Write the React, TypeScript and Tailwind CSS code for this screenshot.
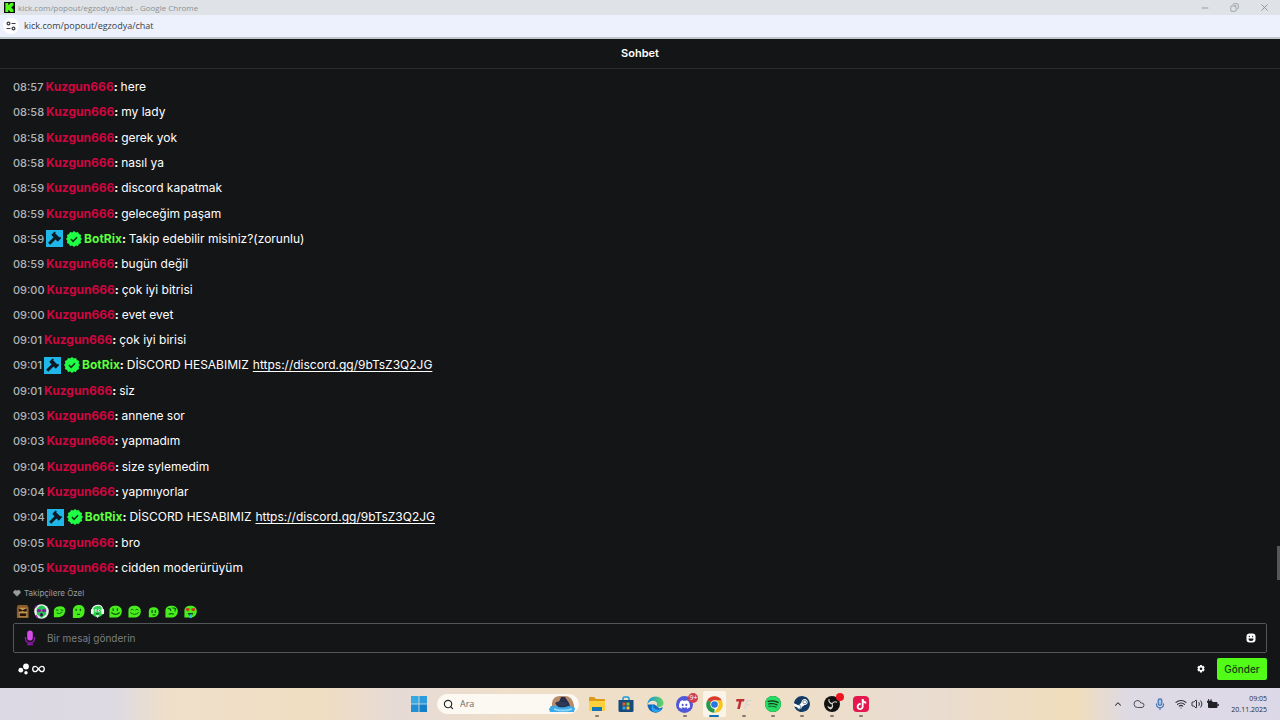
import type { ReactNode } from 'react';
import { SiDiscord, SiSpotify, SiTiktok, SiSteam } from 'react-icons/si';
import { ChevronUp, Cloud, Copy, Heart, Minus, Search, Volume2, Wifi, X } from 'lucide-react';

type Message = { time: string; user: string; text: string; link?: string };

const messages: Message[] = [
    { time: '08:57', user: 'Kuzgun666', text: 'here' },
    { time: '08:58', user: 'Kuzgun666', text: 'my lady' },
    { time: '08:58', user: 'Kuzgun666', text: 'gerek yok' },
    { time: '08:58', user: 'Kuzgun666', text: 'nasıl ya' },
    { time: '08:59', user: 'Kuzgun666', text: 'discord kapatmak' },
    { time: '08:59', user: 'Kuzgun666', text: 'geleceğim paşam' },
    { time: '08:59', user: 'BotRix', text: 'Takip edebilir misiniz?(zorunlu)' },
    { time: '08:59', user: 'Kuzgun666', text: 'bugün değil' },
    { time: '09:00', user: 'Kuzgun666', text: 'çok iyi bitrisi' },
    { time: '09:00', user: 'Kuzgun666', text: 'evet evet' },
    { time: '09:01', user: 'Kuzgun666', text: 'çok iyi birisi' },
    { time: '09:01', user: 'BotRix', text: 'DİSCORD HESABIMIZ', link: 'https://discord.gg/9bTsZ3Q2JG' },
    { time: '09:01', user: 'Kuzgun666', text: 'siz' },
    { time: '09:03', user: 'Kuzgun666', text: 'annene sor' },
    { time: '09:03', user: 'Kuzgun666', text: 'yapmadım' },
    { time: '09:04', user: 'Kuzgun666', text: 'size sylemedim' },
    { time: '09:04', user: 'Kuzgun666', text: 'yapmıyorlar' },
    { time: '09:04', user: 'BotRix', text: 'DİSCORD HESABIMIZ', link: 'https://discord.gg/9bTsZ3Q2JG' },
    { time: '09:05', user: 'Kuzgun666', text: 'bro' },
    { time: '09:05', user: 'Kuzgun666', text: 'cidden moderürüyüm' },
];

const KickLogo = () => (
    <svg viewBox="0 0 12 12" className="h-[11px] w-[11px] shrink-0">
        <rect width="12" height="12" fill="#0b0e0f" />
        <path d="M1.5 1h3.2v2.4h1V2.2h1V1h3.6v3.2H9.2v1h-1v1.6h1v1h1.1V11H6.7V9.8h-1V8.6h-1V11H1.5z" fill="#53fc18" />
    </svg>
);

const ModBadge = () => (
    <svg viewBox="0 0 17 17" className="h-[17px] w-[17px]">
        <rect width="17" height="17" fill="#1fb6ea" />
        <path d="M3.2 13.8l6-6" stroke="#0d1b24" strokeWidth="3" />
        <path d="M7.2 4.2L13 10" stroke="#0d1b24" strokeWidth="4" />
        <path d="M6 5.4L9.2 2M11.2 10.8l3.4-3.4" stroke="#0d1b24" strokeWidth="1.8" />
    </svg>
);

const VerifiedBadge = () => (
    <svg viewBox="0 0 16 16" className="h-4 w-4">
        <path
            d="M8 0l1.8 1.5L12 1l.9 2.1 2.2.9-.5 2.2L16 8l-1.4 1.8.5 2.2-2.2.9L12 15l-2.2-.5L8 16l-1.8-1.5L4 15l-.9-2.1-2.2-.9.5-2.2L0 8l1.4-1.8L.9 4l2.2-.9L4 1l2.2.5z"
            fill="#1fff45"
        />
        <path d="M4.9 8.2l2.2 2.1 4-4" stroke="#0c3512" strokeWidth="1.6" fill="none" />
    </svg>
);

const ChatRow = ({ message }: { message: Message }) => {
    const isBot = message.user === 'BotRix';
    return (
        <li className="flex h-5 items-center whitespace-pre text-xs leading-5 text-white">
            <time className="mr-[2px] text-[11px] leading-5 font-medium text-[#b0b5b9]">{message.time}</time>
            {isBot && (
                <span className="mr-[2px] flex items-center gap-[3px]">
                    <ModBadge />
                    <VerifiedBadge />
                </span>
            )}
            <button type="button" className={isBot ? 'font-bold text-[#5cff3c]' : 'font-bold text-[#cf0640]'}>
                {message.user}
            </button>
            <span className="font-bold">: </span>
            <span>{message.text}</span>
            {message.link && (
                <a href={message.link} className="ml-1 underline underline-offset-2">
                    {message.link}
                </a>
            )}
        </li>
    );
};

const GREEN = '#48ee1c';
const DARK = '#0d5a12';

const blob = 'M1.5 14.5V7.2C1.5 3.6 4 1.8 8 1.8s6.7 2 6.7 5.8c0 4.2-3 6.9-7.2 6.9z';

const emotes: { name: string; art: ReactNode }[] = [
    {
        name: 'öfkeli',
        art: (
            <>
                <path d="M3 1h10l1.500 3v11H2V4z" fill="#8a5c28" />
                <path d="M4 4h9v10H4z" fill="#c29555" />
                <path d="M4 4.500l3.500 2h1l4-2V8H9L8 7 7 8H4z" fill="#21140a" />
                <path d="M5 10h7v3H5z" fill="#21140a" />
            </>
        ),
    },
    {
        name: 'kulaklık mor',
        art: (
            <>
                <circle cx="8" cy="8" r="7.8" fill="#e6f1e8" />
                <path d="M3 5Q8-2 13 5v6l-5 4-5-4z" fill="#22c750" />
                <ellipse cx="5.2" cy="7" rx="2.4" ry="1.8" fill="#8a1ba0" />
                <ellipse cx="10.8" cy="7" rx="2.4" ry="1.8" fill="#8a1ba0" />
                <ellipse cx="8" cy="11.4" rx="1.6" ry="1.8" fill="#3c1048" />
                <path d="M2 12l2 3M1 4l2-2" stroke="#b01fd0" strokeWidth="1.5" />
            </>
        ),
    },
    {
        name: 'göz kırpma',
        art: (
            <>
                <path d="M2 14V6.5C3 3.5 6 2.5 9 2.5c3 0 5 1.5 5 4.5 0 4-3 7-7 7z" fill={GREEN} />
                <path d="M4 6.5h3M9 6l3 1M5 9.5q3 2 6-1" stroke={DARK} fill="none" />
            </>
        ),
    },
    {
        name: 'düşünceli',
        art: (
            <>
                <path d="M2 15V7c0-4 3-6 6.500-6s6 2 6 6-1.500 8-6.500 8z" fill={GREEN} />
                <path d="M5.500 5v2.500M10 5v2.500M6.500 11h3" stroke={DARK} strokeWidth="1.300" fill="none" />
            </>
        ),
    },
    {
        name: 'kulaklık',
        art: (
            <>
                <circle cx="8" cy="8" r="6.2" fill="#28d448" />
                <path d="M2.500 6Q3 2 8 1.500T13.500 6" stroke="#e8f6eb" strokeWidth="1.200" fill="none" />
                <rect x="1" y="5" width="3" height="6" rx="1.5" fill="#e8f6eb" />
                <rect x="12" y="5" width="3" height="6" rx="1.5" fill="#e8f6eb" />
                <path d="M6 12h4l-2 3z" fill="#e8f6eb" />
                <circle cx="6.2" cy="7" r="1.3" fill="#fff" />
                <circle cx="9.8" cy="7" r="1.3" fill="#fff" />
                <path d="M6 7h.8M9.500 7h.8M6.500 10.500h3" stroke="#102b15" />
            </>
        ),
    },
    {
        name: 'gülümseme',
        art: (
            <>
                <path d={blob} fill={GREEN} />
                <path d="M5.5 4.5v3M10 4.5v3M3.500 9q4.500 4 9 0" stroke={DARK} strokeWidth="1.3" fill="none" />
            </>
        ),
    },
    {
        name: 'mutlu',
        art: (
            <>
                <path d={blob} fill={GREEN} />
                <path d="M4 6.500q1.500-2 3 0M9 6.500q1.500-2 3 0M3.500 9q4.500 4 9 0" stroke={DARK} fill="none" />
            </>
        ),
    },
    {
        name: 'küçük',
        art: (
            <>
                <path d="M3 14V8c0-3 2-4.500 5-4.500s5.500 1.500 5.500 5S11 14 8 14z" fill={GREEN} />
                <path d="M6.500 6.500v3M10 6.500v3M7 11.500h3" stroke={DARK} strokeWidth="1.400" />
            </>
        ),
    },
    {
        name: 'şaşkın',
        art: (
            <>
                <path d={blob} fill={GREEN} />
                <path d="M4 4.500l3 1v2M9 4l3.500 1-1 3M5 11q3-1.500 5.500 0" stroke={DARK} strokeWidth="1.200" fill="none" />
            </>
        ),
    },
    {
        name: 'aşık',
        art: (
            <>
                <path d={blob} fill={GREEN} />
                <path d="M3 4.500h4v2L5 8 3 6.500zM9 4.500h4v2L11 8 9 6.500z" fill="#d0301c" />
                <path d="M5 9.500h6l-1.500 3h-3z" fill="#11491a" />
                <path d="M7 11h2.500v4H7z" fill="#38b8e8" />
            </>
        ),
    },
];

const MicIcon = () => (
    <svg viewBox="0 0 12 16" className="h-4 w-3">
        <rect x="3.2" y=".5" width="5.6" height="10" rx="2.8" fill="#d44be8" />
        <path d="M1.5 7v1.500a4.500 4.500 0 009 0V7M6 13v2M3 14.500h6" stroke="#8b17a8" strokeWidth="1.500" fill="none" />
    </svg>
);

const EdgeIcon = () => (
    <svg viewBox="0 0 18 18" className="h-[17px] w-[17px]">
        <defs>
            <linearGradient id="edge-top" x1="0" x2="1" y1="0" y2="0">
                <stop stopColor="#1694df" />
                <stop offset="1" stopColor="#64d65a" />
            </linearGradient>
        </defs>
        <path d="M.5 9A8.500 8.500 0 0017 12l-4 1-5-4z" fill="#1266bd" />
        <path d="M.5 9C.5 4 4.500.5 9 .5c5 0 8.500 3.500 8.500 7 0 3-2.500 4.200-4.700 4.200-1.600 0-2.800-.6-2.800-1.300 0-.5.8-.8.8-2C10.800 6.500 9 5 6.500 5 3.500 5 1.200 6.500.5 9z" fill="url(#edge-top)" />
        <path d="M6.300 8.500C6 12 8.500 14.500 12 14.500c1.800 0 3.300-.6 4.300-1.200-1.600 2.700-4 4.200-7 4.200C5.500 17 3 13 6.300 8.500z" fill="#2b9fe8" />
    </svg>
);

const ChromeIcon = () => (
    <svg viewBox="0 0 18 18" className="h-[17px] w-[17px]">
        <path d="M9 9L1.400 4.600a8.800 8.800 0 0115.200 0z" fill="#dc3a2c" />
        <path d="M9 9L1.400 4.600A8.800 8.800 0 009 17.800z" fill="#23994a" />
        <path d="M9 17.800a8.800 8.800 0 007.600-13.200H9V9l3.800 2.200z" fill="#f6c61c" />
        <circle cx="9" cy="9" r="4.400" fill="#fff" />
        <circle cx="9" cy="9" r="3.500" fill="#2d74e0" />
    </svg>
);

const ObsIcon = () => (
    <svg viewBox="0 0 16 16" className="h-4 w-4">
        <circle cx="8" cy="8" r="8" fill="#111" />
        <g fill="none" stroke="#d8d4cf" strokeWidth="1.100">
            <path d="M5 3c-.5 2.500.8 4.300 3 4.600" />
            <path d="M13.200 6.200c-2.400-.9-4.400-.2-5.200 1.800" />
            <path d="M6.200 13.200C8.300 12 9 9.800 8 8" />
        </g>
        <path d="M3.500 9.500c0 2 1 3.500 2.700 3.700 1.200-.6 1.900-1.600 2-2.700-1.900.9-3.700.5-4.700-1z" fill="#cfcbc6" />
    </svg>
);

const taskApps: { name: string; icon: ReactNode; running?: boolean; active?: boolean }[] = [
    {
        name: 'Dosya Gezgini',
        running: true,
        icon: (
            <svg viewBox="0 0 18 16" className="h-4 w-[18px]">
                <path d="M1 2q0-1 1-1h4l2 2h8q1 0 1 1v10H1z" fill="#dc9a15" />
                <path d="M1 5h16v8.500q0 1.500-1.500 1.500h-13Q1 15 1 13.500z" fill="#fdd03c" />
                <path d="M4 11h10v4H4z" fill="#1677b8" />
            </svg>
        ),
    },
    {
        name: 'Microsoft Store',
        icon: (
            <svg viewBox="0 0 16 17" className="h-[17px] w-4">
                <path d="M5 5V2.500Q5 1 6.500 1h3Q11 1 11 2.500V5" stroke="#1c9ad6" strokeWidth="1.500" fill="none" />
                <path d="M.5 4h15v10.500q0 1.500-1.500 1.500H2Q.5 16 .5 14.500z" fill="#17497c" />
                <path d="M4.500 6.500h3v3h-3z" fill="#e85a2a" />
                <path d="M8.500 6.500h3v3h-3z" fill="#86c332" />
                <path d="M4.500 10.500h3v3h-3z" fill="#2ba8ec" />
                <path d="M8.500 10.500h3v3h-3z" fill="#fbc02d" />
            </svg>
        ),
    },
    { name: 'Microsoft Edge', icon: <EdgeIcon /> },
    {
        name: 'Discord',
        running: true,
        icon: (
            <span className="relative flex h-[17px] w-[17px] items-center justify-center rounded-full bg-[#5058d8] text-white">
                <SiDiscord size={11} />
                <span className="absolute -top-[3px] -right-[5px] flex h-[10px] w-[10px] items-center justify-center rounded-full bg-[#cf3d50] text-[7px] leading-none">
                    9+
                </span>
            </span>
        ),
    },
    { name: 'Google Chrome', running: true, active: true, icon: <ChromeIcon /> },
    {
        name: 'TF',
        running: true,
        icon: (
            <svg viewBox="0 0 18 14" className="h-[14px] w-[18px]">
                <path d="M1.500 2h8L9 4.400H6.600L4.800 12H2.200L4 4.400H1z" fill="#bd3038" />
                <path d="M11 3h6l-.5 1.600h-4L12 7h3l-.5 1.500h-3L10.500 12H9z" fill="#d9d6d3" />
            </svg>
        ),
    },
    {
        name: 'Spotify',
        running: true,
        icon: (
            <span className="rounded-full bg-[#123c1f] text-[#27dc62]">
                <SiSpotify size={16} />
            </span>
        ),
    },
    {
        name: 'Steam',
        running: true,
        icon: (
            <span className="rounded-full bg-white text-[#153a61]">
                <SiSteam size={16} />
            </span>
        ),
    },
    {
        name: 'OBS Studio',
        running: true,
        icon: (
            <span className="relative">
                <ObsIcon />
                <span className="absolute -top-[3px] -right-[4px] h-2 w-2 rounded-full bg-[#ee1620]" />
            </span>
        ),
    },
    {
        name: 'TikTok',
        running: true,
        icon: (
            <span className="flex h-4 w-4 items-center justify-center rounded-sm bg-[#e3184f] text-white">
                <SiTiktok size={11} />
            </span>
        ),
    },
];

const BrowserBar = () => (
    <header className="font-['Open_Sans',sans-serif]">
        <div className="flex h-[15px] items-center justify-between bg-[#dfe3e7] pr-[10px] pl-1 text-[#8a9095]">
            <div className="flex items-center gap-[3px] text-[8px] leading-3">
                <KickLogo />
                <span>kick.com/popout/egzodya/chat - Google Chrome</span>
            </div>
            <div className="flex items-center gap-[20px]">
                <button type="button" aria-label="Küçült">
                    <Minus size={10} strokeWidth={2} />
                </button>
                <button type="button" aria-label="Geri yükle">
                    <Copy size={9} strokeWidth={2} className="-scale-x-100" />
                </button>
                <button type="button" aria-label="Kapat">
                    <X size={11} strokeWidth={2} />
                </button>
            </div>
        </div>
        <div className="flex h-6 items-center gap-[5px] border-b-2 border-[#bcc8cc] bg-[#edf1fd] pl-[3px] text-[9px] text-[#3a3e44]">
            <button type="button" aria-label="Site bilgileri" className="flex h-4 w-4 items-center justify-center rounded-full bg-white">
                <svg viewBox="0 0 10 10" className="h-[10px] w-[10px]" fill="none" stroke="#3a3e44" strokeWidth="1.2">
                    <path d="M5.500 2.500h4M.5 7.500h4" />
                    <circle cx="2.500" cy="2.500" r="1.400" />
                    <circle cx="7.500" cy="7.500" r="1.400" />
                </svg>
            </button>
            <span>kick.com/popout/egzodya/chat</span>
        </div>
    </header>
);

const Composer = () => (
    <form className="flex flex-col px-[13px] pb-2" onSubmit={(e) => e.preventDefault()}>
        <p className="flex h-4 items-center gap-[3px] text-[8px] text-[#9a9da0]">
            <Heart size={8} fill="currentColor" />
            Takipçilere Özel
        </p>
        <div className="flex h-5 w-[185px] items-center justify-between pl-[2px]">
            {emotes.map((emote) => (
                <button key={emote.name} type="button" aria-label={emote.name}>
                    <svg viewBox="0 0 16 16" className="h-[15px] w-[15px]">
                        {emote.art}
                    </svg>
                </button>
            ))}
        </div>
        <div className="mt-[2px] flex h-[30px] items-center rounded-xs border border-[#52555a] px-[10px]">
            <MicIcon />
            <input
                type="text"
                aria-label="Bir mesaj gönderin"
                placeholder="Bir mesaj gönderin"
                className="ml-[11px] min-w-0 flex-1 bg-transparent text-[10px] text-white outline-none placeholder:text-[#7b7e82]"
            />
            <button type="button" aria-label="İfadeler">
                <svg viewBox="0 0 10 10" className="h-[10px] w-[10px]">
                    <rect x=".5" y=".5" width="9" height="9" rx="3" fill="#fff" />
                    <path d="M3.300 2.800v1.400M6.700 2.800v1.400" stroke="#141517" />
                    <path d="M2.500 5.500h5Q7.500 8 5 8T2.500 5.500z" fill="#141517" />
                </svg>
            </button>
        </div>
        <div className="mt-[5px] flex h-[22px] items-center justify-between">
            <div className="flex items-center gap-[2px] pl-[5px]">
                <button type="button" aria-label="Puanlar">
                    <svg viewBox="0 0 12 12" className="h-3 w-3" fill="#fff">
                        <circle cx="8" cy="3.500" r="2.900" />
                        <circle cx="2.800" cy="7.200" r="2.400" />
                        <circle cx="8" cy="9.800" r="1.700" />
                    </svg>
                </button>
                <button type="button" aria-label="Sonsuz">
                    <svg viewBox="0 0 13 8" className="h-2 w-[13px]" fill="none" stroke="#fff" strokeWidth="1.3">
                        <path d="M6.500 4C5 2 4.400 1.300 3.400 1.300a2.700 2.700 0 000 5.400C4.400 6.700 5 6 6.500 4s2.100-2.700 3.100-2.700a2.700 2.700 0 010 5.400C8.600 6.700 8 6 6.500 4z" />
                    </svg>
                </button>
            </div>
            <div className="flex items-center gap-[11px]">
                <button type="button" aria-label="Ayarlar">
                    <svg viewBox="0 0 10 10" className="h-[10px] w-[10px]">
                        <path d="M4 1h2l.3 1.200 1.200-.4 1.200 1.700-.9 1 .9 1.300-1.200 1.600-1.200-.3L6 8.500H4l-.3-1.400-1.200.3-1.200-1.600.9-1.300-.9-1 1.200-1.700 1.200.4z" fill="#fff" />
                        <circle cx="5" cy="4.700" r="1.300" fill="#141517" />
                    </svg>
                </button>
                <button type="submit" className="h-[22px] w-[50px] rounded-xs bg-[#53fc18] text-[10px] font-medium text-[#14400b]">
                    Gönder
                </button>
            </div>
        </div>
    </form>
);

const Taskbar = () => (
    <footer className="grid h-8 grid-cols-[1fr_auto_1fr] items-center bg-[linear-gradient(90deg,#dcd8e4_0%,#dedae2_9%,#efdfca_13%,#f0dec2_25%,#e6dad6_31%,#efdfca_40%,#efdfc6_60%,#e9dcd2_72%,#f0ddba_84%,#dedae4_88%,#dcd8e8_100%)] font-['Open_Sans',sans-serif]">
        <div />
        <nav className="flex items-center gap-[3px]">
            <button type="button" aria-label="Başlat" className="flex w-[30px] justify-center">
                <svg viewBox="0 0 16 16" className="h-4 w-4">
                    <path d="M0 0h7.600v7.600H0z" fill="#35a9e2" />
                    <path d="M8.400 0H16v7.600H8.400z" fill="#2c9bdc" />
                    <path d="M0 8.400h7.600V16H0z" fill="#1f8fd6" />
                    <path d="M8.400 8.400H16V16H8.400z" fill="#137fc9" />
                </svg>
            </button>
            <label className="flex h-5 w-[142px] items-center gap-[6px] overflow-hidden rounded-full bg-[#fcf8f2] pr-[3px] pl-[6px] text-[#26282b]">
                <Search size={11} strokeWidth={2.5} className="shrink-0" />
                <input type="text" aria-label="Ara" placeholder="Ara" className="w-full min-w-0 bg-transparent text-[9px] outline-none placeholder:text-[#6d6a68]" />
                <svg viewBox="0 0 28 18" className="h-[18px] w-7 shrink-0">
                    <path d="M4 8Q5 1 12 1h5q7 0 9 9v5H4z" fill="#b88c68" />
                    <path d="M9 15l2-8 2-5h4l4 6 2 7z" fill="#252f4b" />
                    <path d="M7 8q4-3 7-1l6 1-2 3H9z" fill="#2f3957" />
                    <path d="M3 11q5-1 8 1 6 1 9-1 5 0 7 2l-1 4H2l-1-3z" fill="#3ba9e8" />
                    <path d="M6 13q8 3 18 0v2q-9 3-18 0z" fill="#8bd6f5" />
                </svg>
            </label>
            <div className="grid w-[294px] grid-cols-10">
                {taskApps.map((app) => (
                    <button
                        key={app.name}
                        type="button"
                        aria-label={app.name}
                        className={`relative mx-auto flex h-[26px] w-[23px] items-center justify-center rounded-xs ${app.active ? 'bg-[#faf3e8]' : ''}`}
                    >
                        {app.icon}
                        {app.running && (
                            <span
                                className={`absolute bottom-0 left-1/2 h-[2px] -translate-x-1/2 rounded-full ${app.active ? 'w-[10px] bg-[#1672b8]' : 'w-1 bg-[#827a70]'}`}
                            />
                        )}
                    </button>
                ))}
            </div>
        </nav>
        <div className="flex items-center justify-end pr-[13px] text-[#2b2d33]">
            <ChevronUp size={10} strokeWidth={2.5} />
            <Cloud size={12} strokeWidth={2} className="ml-[10px] text-[#4d5056]" />
            <svg viewBox="0 0 10 12" className="ml-[10px] h-3 w-[10px]" fill="none" stroke="#3e72b4" strokeWidth="1.2">
                <rect x="3.200" y=".8" width="3.600" height="6.500" rx="1.800" fill="#a9c4e8" />
                <path d="M1.500 5.500v.8a3.500 3.500 0 007 0v-.8M5 10v2" />
            </svg>
            <Wifi size={12} strokeWidth={2.2} className="ml-[10px]" />
            <Volume2 size={12} strokeWidth={2} className="ml-1" />
            <svg viewBox="0 0 12 10" className="ml-1 h-[10px] w-3">
                <rect x="1" y="3" width="9.500" height="6" rx="1" fill="#202227" />
                <path d="M10.500 5h1.300v2h-1.300z" fill="#202227" />
                <path d="M1.500 0v2M4 0v2M.5 2H5v1.500L3.500 5h-1L.5 3.500z" fill="#202227" stroke="#202227" strokeWidth=".8" />
            </svg>
            <time className="ml-3 text-right text-[7px] leading-[11px]">
                09:05
                <br />
                20.11.2025
            </time>
        </div>
    </footer>
);

export default function App() {
    return (
        <div className="flex min-h-screen flex-col bg-[#141517] font-['Inter',sans-serif]">
            <BrowserBar />
            <div className="flex h-[30px] items-center justify-center border-b border-[#2b2d30] text-[11px] font-semibold text-white">
                <h1>Sohbet</h1>
            </div>
            <main className="relative flex flex-1 flex-col">
                <ul className="flex flex-1 flex-col justify-between px-[13px] pt-2 pb-[7px]">
                    {messages.map((message, i) => (
                        <ChatRow key={i} message={message} />
                    ))}
                </ul>
                <span className="absolute right-0 bottom-[5px] h-[34px] w-[3px] bg-[#55575a]" />
            </main>
            <Composer />
            <Taskbar />
        </div>
    );
}
